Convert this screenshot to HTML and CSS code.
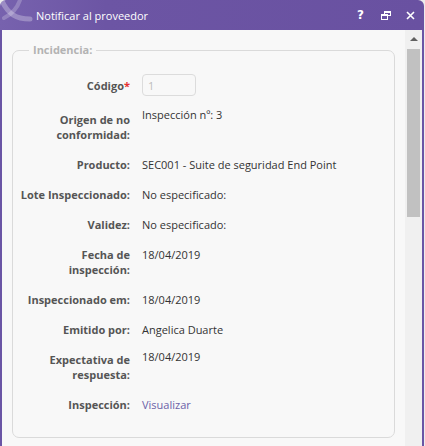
FILE: index.html
```html
<!DOCTYPE html>
<html lang="es">
<head>
<meta charset="utf-8">
<title>Notificar al proveedor</title>
<link rel="stylesheet" href="styles.css">
</head>
<body>
<div class="window">
  <div class="titlebar">
    <svg class="logo" width="34" height="26" viewBox="0 0 34 26">
      <path d="M2 1 C8 14 16 19 30 19" fill="none" stroke="rgba(255,255,255,0.28)" stroke-width="5" stroke-linecap="round"/>
      <path d="M20 0 C17 9 12 14 4 18" fill="none" stroke="rgba(255,255,255,0.22)" stroke-width="4" stroke-linecap="round"/>
    </svg>
    <span class="title">Notificar al proveedor</span>
    <div class="controls">
      <span class="ctl help">?</span>
      <svg class="ctl" width="10" height="9" viewBox="0 0 10 9">
        <rect x="3.5" y="0.5" width="6" height="4" fill="none" stroke="#fff" stroke-width="1"/>
        <rect x="3.5" y="0.5" width="6" height="1.5" fill="#fff"/>
        <rect x="0.5" y="3.5" width="6" height="5" fill="#6a52a2" stroke="#fff" stroke-width="1"/>
        <rect x="0.5" y="3.5" width="6" height="1.5" fill="#fff"/>
      </svg>
      <svg class="ctl" width="9" height="9" viewBox="0 0 9 9">
        <path d="M1 1 L8 8 M8 1 L1 8" stroke="#fff" stroke-width="1.6"/>
      </svg>
    </div>
  </div>
  <div class="body">
    <div class="content">
      <fieldset class="group">
        <legend>Incidencia:</legend>
        <div class="form">
          <div class="label">Código<span class="req">*</span></div>
          <div class="value"><div class="input">1</div></div>

          <div class="label first-after-input">Origen de no<br>conformidad:</div>
          <div class="value raised first-after-input">Inspección nº: 3</div>

          <div class="label">Producto:</div>
          <div class="value">SEC001 - Suite de seguridad End Point</div>

          <div class="label">Lote Inspeccionado:</div>
          <div class="value">No especificado:</div>

          <div class="label">Validez:</div>
          <div class="value">No especificado:</div>

          <div class="label">Fecha de<br>inspección:</div>
          <div class="value">18/04/2019</div>

          <div class="label">Inspeccionado em:</div>
          <div class="value">18/04/2019</div>

          <div class="label">Emitido por:</div>
          <div class="value">Angelica Duarte</div>

          <div class="label">Expectativa de<br>respuesta:</div>
          <div class="value raised">18/04/2019</div>

          <div class="label">Inspección:</div>
          <div class="value"><a class="link" href="#">Visualizar</a></div>
        </div>
      </fieldset>
    </div>
    <div class="scrollbar">
      <div class="arrow"></div>
      <div class="thumb"></div>
    </div>
  </div>
</div>
</body>
</html>
```
FILE: styles.css
```css
* { box-sizing: border-box; }
html, body {
  margin: 0;
  padding: 0;
  height: 100%;
  background: #ececec;
  overflow: hidden;
}
body {
  font-family: "Open Sans", Lato, sans-serif;
  font-size: 11px;
  color: #333;
}
.window {
  width: 424px;
  height: 100%;
  display: flex;
  flex-direction: column;
  border-radius: 6px 6px 0 0;
  overflow: hidden;
}
.titlebar {
  height: 30px;
  flex: none;
  position: relative;
  display: flex;
  align-items: center;
  background: linear-gradient(to right, #7762ae 0%, #6c55a4 25%, #6951a1 100%);
  color: #fff;
  padding-left: 36px;
  padding-right: 9px;
}
.logo {
  position: absolute;
  left: 0;
  top: 0;
}
.title {
  font-size: 11px;
  flex: 1;
  position: relative;
}
.controls {
  display: flex;
  align-items: center;
  gap: 15px;
}
.ctl { display: block; }
.help {
  font-weight: bold;
  font-size: 12px;
  line-height: 12px;
  font-family: "DejaVu Sans", sans-serif;
  margin-right: 2px;
}
.body {
  flex: 1;
  display: flex;
  border-left: 2px solid #6a55a5;
  border-right: 2px solid #6a55a5;
  background: #f8f8f8;
}
.content {
  flex: 1;
  padding: 12px 10px 0 10px;
}
.group {
  margin: 0;
  border: 1px solid #dadada;
  border-radius: 7px;
  padding: 0 0 25px 0;
  min-height: 0;
}
.group legend {
  margin-left: 16px;
  padding: 0 4px;
  font-weight: bold;
  color: #b3b3b3;
  font-size: 11px;
  line-height: 16px;
}
.form {
  display: grid;
  grid-template-columns: 117px 1fr;
  column-gap: 12px;
  row-gap: 15px;
  line-height: 15px;
  padding-top: 16px;
}
.label {
  text-align: right;
  font-weight: bold;
  color: #555;
  white-space: nowrap;
}
.label:first-child { align-self: center; }
.value { white-space: nowrap; }
.first-after-input { margin-top: 1px; }
.raised { margin-top: -3px; }
.first-after-input.raised { margin-top: -4px; }
.req { color: #e53030; }
.input {
  width: 54px;
  height: 22px;
  border: 1px solid #dcdcdc;
  border-radius: 4px;
  background: #f8f8f8;
  color: #bdbdbd;
  padding: 3px 5px;
  line-height: 15px;
}
.link {
  color: #6b62a8;
  text-decoration: none;
}
.scrollbar {
  width: 17px;
  flex: none;
  background: #f0f0f0;
  display: flex;
  flex-direction: column;
  align-items: center;
  padding-top: 7px;
}
.arrow {
  width: 0;
  height: 0;
  border-left: 4px solid transparent;
  border-right: 4px solid transparent;
  border-bottom: 4px solid #606060;
}
.thumb {
  margin-top: 8px;
  width: 13px;
  height: 168px;
  background: #c1c1c1;
}
```
